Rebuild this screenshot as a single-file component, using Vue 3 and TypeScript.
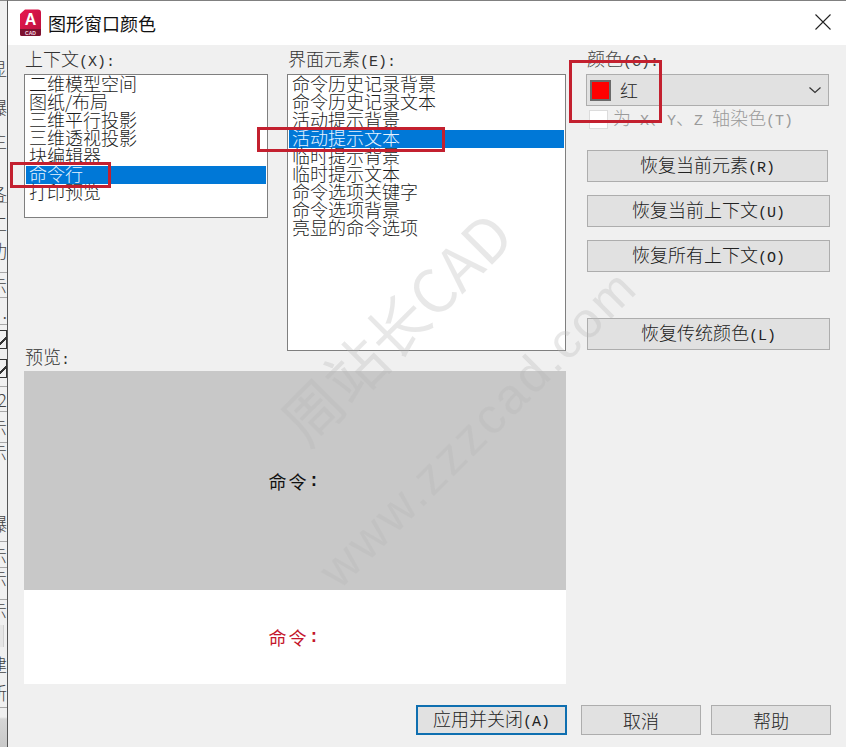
<script setup lang="ts">
interface StripRow { h: number; t?: string; line?: boolean; check?: boolean; ghost?: boolean }
const strip: StripRow[] = [
  { h: 58 }, { h: 18, t: '显' }, { h: 21 }, { h: 18, t: '爆' }, { h: 15 }, { h: 18, t: '主' },
  { h: 34 }, { h: 20, t: '各', line: true }, { h: 10 }, { h: 20, t: '工' }, { h: 34, t: '功' }, { h: 6, line: true },
  { h: 25, t: '示', line: true }, { h: 27, t: '.', line: true }, { h: 28, check: true }, { h: 30, check: true },
  { h: 4, line: true }, { h: 25, t: '2', line: true }, { h: 31, t: '示', line: true }, { h: 18, t: '示' },
  { h: 43 }, { h: 38, t: '爆', line: true }, { h: 26, t: '示', line: true }, { h: 20, t: '示' }, { h: 12, line: true },
  { h: 20, t: '示' }, { h: 5 }, { h: 22, ghost: true }, { h: 33, t: '建' }, { h: 24, t: '新' }, { h: 4, line: true },
]
const contexts = ['二维模型空间', '图纸/布局', '三维平行投影', '三维透视投影', '块编辑器', '命令行', '打印预览']
const elements = ['命令历史记录背景', '命令历史记录文本', '活动提示背景', '活动提示文本', '临时提示背景', '临时提示文本', '命令选项关键字', '命令选项背景', '亮显的命令选项']
</script>

<template>
  <div class="page">
    <div class="strip">
      <div
        v-for="(r, i) in strip"
        :key="i"
        class="strip-row"
        :class="{ lined: r.line }"
        :style="{ height: r.h + 'px' }"
      >
        <span v-if="r.check" class="strip-check"></span>
        <span v-else-if="r.ghost" class="strip-ghost"></span>
        <span v-else-if="r.t" class="strip-char">{{ r.t }}</span>
      </div>
    </div>

    <div class="dialog">
      <header class="title">
        <svg class="logo" width="24" height="28" viewBox="0 0 24 28">
          <defs>
            <linearGradient id="lg" x1="0" y1="0" x2="1" y2="1">
              <stop offset="0" stop-color="#e8174f" />
              <stop offset="1" stop-color="#b80f3c" />
            </linearGradient>
          </defs>
          <path d="M6 0.5h13a3 3 0 0 1 3 3V25a2 2 0 0 1-2 2H3a2 2 0 0 1-2-2V5z" fill="url(#lg)" />
          <path d="M1 20h21v5a2 2 0 0 1-2 2H3a2 2 0 0 1-2-2z" fill="#7c1230" />
          <text x="11.5" y="16" class="logo-a" text-anchor="middle">A</text>
          <text x="11.5" y="25.5" class="logo-cad" text-anchor="middle">CAD</text>
        </svg>
        <span class="title-text">图形窗口颜色</span>
        <svg class="close" width="16" height="16" viewBox="0 0 16 16">
          <path d="M0.5 0.5L15.5 15.5M15.5 0.5L0.5 15.5" stroke="#222" stroke-width="1.1" fill="none" />
        </svg>
      </header>

      <div class="body">
        <div class="columns">
          <div class="main">
            <div class="lists">
              <div class="col-ctx">
                <div class="label">上下文<span class="la">(X):</span></div>
                <ul class="list ctx">
                  <li v-for="c in contexts" :key="c" :class="{ sel: c === '命令行' }">{{ c }}</li>
                </ul>
              </div>
              <div class="col-el">
                <div class="label">界面元素<span class="la">(E):</span></div>
                <ul class="list el">
                  <li v-for="e in elements" :key="e" :class="{ sel: e === '活动提示文本' }">{{ e }}</li>
                </ul>
              </div>
              <div class="label preview-label">预览<span class="la">:</span></div>
            </div>
            <div class="preview">
              <div class="pv-top">命令<span class="colon">:</span></div>
              <div class="pv-bottom">命令<span class="colon">:</span></div>
            </div>
          </div>

          <aside class="side">
            <div class="label side-label">颜色<span class="la">(C):</span></div>
            <div class="combo">
              <span class="swatch"></span>
              <span class="combo-text">红</span>
              <svg class="chev" width="14" height="8" viewBox="0 0 14 8">
                <path d="M1.5 1.5L7 6.5L12.5 1.5" stroke="#333" stroke-width="1.2" fill="none" />
              </svg>
            </div>
            <div class="tint">
              <span class="box"></span>
              <span class="tint-text">为<span class="la"> X</span>、<span class="la">Y</span>、<span class="la">Z </span>轴染色<span class="la">(T)</span></span>
            </div>
            <button class="btn b1">恢复当前元素<span class="la">(R)</span></button>
            <button class="btn b2">恢复当前上下文<span class="la">(U)</span></button>
            <button class="btn b2">恢复所有上下文<span class="la">(O)</span></button>
            <button class="btn b4">恢复传统颜色<span class="la">(L)</span></button>
          </aside>
        </div>

        <footer class="footer">
          <button class="btn apply">应用并关闭<span class="la">(A)</span></button>
          <button class="btn cancel">取消</button>
          <button class="btn help">帮助</button>
        </footer>
      </div>

      <div class="mark mark-a">周站长CAD</div>
      <div class="mark mark-b">www.zzzcad.com</div>
      <i class="hl hl-1"></i>
      <i class="hl hl-2"></i>
      <i class="hl hl-3"></i>
    </div>
  </div>
</template>

<style>
html, body { margin: 0; background: #f0f0f0; }
</style>

<style scoped>
.page {
  display: flex;
  width: 846px;
  height: 747px;
  overflow: hidden;
  position: relative;
  font-family: "Noto Sans CJK SC", "Liberation Mono", sans-serif;
  font-weight: 300;
  font-size: 18px;
  line-height: 18px;
  color: #1c1c1c;
}
.la { font-family: "Liberation Mono", monospace; font-size: 15px; font-weight: 400; }

.strip {
  width: 7px;
  flex: none;
  height: 747px;
  border-top: 1px solid #8a8a8a;
  box-sizing: border-box;
  overflow: hidden;
  display: flex;
  flex-direction: column;
  background: linear-gradient(#f0f0f0 0, #f0f0f0 716px, #d6d6d6 718px, #c8c8c8 100%);
}
.strip-row {
  display: flex;
  justify-content: flex-end;
  align-items: center;
  flex: none;
  overflow: hidden;
  box-sizing: border-box;
  color: #444;
  font-size: 18px;
  white-space: nowrap;
}
.strip-char { flex: none; }
.strip-row.lined { border-bottom: 1px solid #a8a8a8; }
.strip-check {
  flex: none;
  width: 16px;
  height: 19px;
  border: 1.5px solid #333;
  box-sizing: border-box;
  background: linear-gradient(135deg, transparent 62%, #333 62%, #333 72%, transparent 72%);
}
.strip-ghost {
  flex: none;
  width: 4px;
  height: 22px;
  margin-right: 3px;
  background: #e6e6e6;
  border-right: 1px solid #d0d0d0;
}

.dialog {
  flex: 1;
  position: relative;
  display: flex;
  flex-direction: column;
  border-left: 1px solid #555;
  border-top: 1px solid #808080;
  box-sizing: border-box;
  min-width: 0;
}
.title {
  height: 44px;
  flex: none;
  background: #fff;
  display: flex;
  align-items: center;
  padding: 0 15px 0 11px;
}
.logo { flex: none; margin-top: -1px; }
.logo-a { font: 700 16px "Liberation Sans", sans-serif; fill: #fff; }
.logo-cad { font: 700 5px "Liberation Sans", sans-serif; fill: #f4d9e0; }
.title-text { margin-left: 5px; color: #111; font-weight: 400; margin-top: -1px; }
.close { margin-left: auto; margin-top: -2px; }

.body {
  flex: 1;
  background: #f0f0f0;
  padding: 6px 16px 0 16px;
  display: flex;
  flex-direction: column;
}
.columns { display: flex; gap: 21px; }
.main { width: 542px; flex: none; }
.lists {
  display: grid;
  grid-template-columns: 244px 279px;
  column-gap: 19px;
  grid-template-rows: auto 1fr;
  height: 316px;
}
.col-ctx { grid-column: 1; grid-row: 1; }
.col-el { grid-column: 2; grid-row: 1 / span 2; }
.label { height: 18px; line-height: 15px; margin-bottom: 5px; padding-left: 1px; color: #333; white-space: nowrap; }
.preview-label { grid-column: 1; grid-row: 2; align-self: end; margin: 0; }

.list {
  list-style: none;
  margin: 0;
  background: #fff;
  border: 1px solid #7f7f7f;
  box-sizing: border-box;
  padding: 1px;
}
.list li { height: 18px; line-height: 15px; padding-left: 3px; white-space: nowrap; color: #1c1c1c; }
.list li.sel { background: #0078d7; color: #e6f3ff; }
.ctx { height: 144px; }
.el { height: 277px; }

.preview { margin-top: 4px; height: 313px; display: flex; flex-direction: column; }
.pv-top, .pv-bottom {
  display: flex;
  align-items: center;
  justify-content: center;
  letter-spacing: 2px;
  font-weight: 400;
}
.pv-top { height: 219px; background: #c8c8c8; color: #111; }
.pv-bottom { height: 94px; background: #fff; color: #c4162c; }
.colon { font-family: "Liberation Mono", monospace; font-weight: 700; font-size: 18px; }

.side { width: 243px; flex: none; }
.side-label { color: #444; padding-left: 0; }
.combo {
  width: 243px;
  height: 32px;
  margin-left: -1px;
  background: #e1e1e1;
  border: 1px solid #adadad;
  box-sizing: border-box;
  display: flex;
  align-items: center;
  padding: 0 6px 0 3px;
}
.swatch {
  width: 21px;
  height: 21px;
  background: #ff0000;
  border: 2px solid #6a6a6a;
  box-sizing: border-box;
  flex: none;
}
.combo-text { margin-left: 9px; color: #222; }
.chev { margin-left: auto; }
.tint { display: flex; align-items: center; margin-top: 4px; height: 19px; padding-left: 2px; }
.box { width: 19px; height: 19px; background: #fff; border: 1px solid #dcdcdc; box-sizing: border-box; flex: none; }
.tint-text { margin-left: 5px; color: #9a9a9a; white-space: pre; }

.btn {
  font: inherit;
  color: #222;
  background: #e1e1e1;
  border: 1px solid #adadad;
  box-sizing: border-box;
  height: 32px;
  padding: 0;
  display: block;
  width: 243px;
  text-align: center;
  white-space: nowrap;
}
.b1 { width: 241px; margin-top: 21px; }
.b2 { margin-top: 13px; }
.b4 { margin-top: 46px; }

.footer {
  display: flex;
  justify-content: flex-end;
  margin: 21px -1px 0 0;
}
.footer .btn { height: 30px; }
.apply { width: 151px; border: 2px solid #0f6fb0; }
.cancel { width: 120px; margin-left: 14px; }
.help { width: 120px; margin-left: 10px; }

.mark {
  position: absolute;
  pointer-events: none;
  white-space: nowrap;
  color: rgba(185, 185, 185, 0.32);
  transform: rotate(-45deg);
  transform-origin: center;
  font-weight: 400;
}
.mark-a { font-size: 60px; line-height: 60px; left: 236px; top: 295px; width: 300px; text-align: center; }
.mark-b { font-size: 50px; line-height: 54px; left: 258px; top: 402px; width: 420px; text-align: center; font-family: "Liberation Sans", sans-serif; letter-spacing: 3px; }

.hl { position: absolute; border: 3px solid #c3202f; box-sizing: border-box; pointer-events: none; }
.hl-1 { left: 2px; top: 161px; width: 101px; height: 26px; }
.hl-2 { left: 249px; top: 126px; width: 188px; height: 25px; }
.hl-3 { left: 561px; top: 59px; width: 93px; height: 63px; }
</style>
